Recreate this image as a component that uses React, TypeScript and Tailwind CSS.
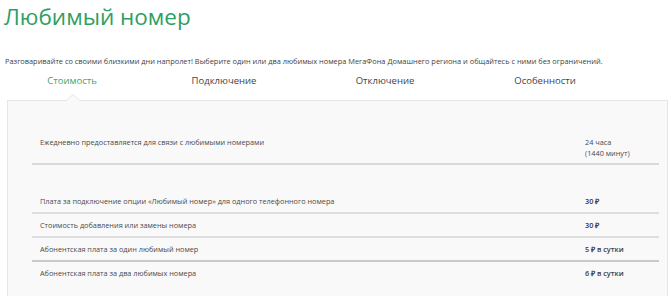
import React from 'react';

const tabs = [
  { label: 'Стоимость', w: 'w-[144px]', active: true },
  { label: 'Подключение', w: 'w-[160px]', active: false },
  { label: 'Отключение', w: 'w-[162px]', active: false },
  { label: 'Особенности', w: 'w-[158px]', active: false },
];

const prices = [
  { label: 'Плата за подключение опции «Любимый номер» для одного телефонного номера', value: '30 ₽', border: 'border-[#dedede]' },
  { label: 'Стоимость добавления или замены номера', value: '30 ₽', border: 'border-[#dedede]' },
  { label: 'Абонентская плата за один любимый номер', value: '5 ₽ в сутки', border: 'border-[#c9c9c9]' },
  { label: 'Абонентская плата за два любимых номера', value: '6 ₽ в сутки', border: 'border-transparent' },
];

const App: React.FC = () => {
  return (
    <div className="w-[671px] h-[296px] overflow-hidden bg-white font-['Open_Sans',sans-serif] text-[#4a4a4a]">
      {/* Title */}
      <h1 className="pl-[4px] pt-[2px] text-[22.5px] leading-[30px] text-[#2f9e62]">Любимый номер</h1>

      {/* Description */}
      <p className="mt-[24px] pl-[5px] text-[7.4px] leading-[10px] text-[#3f3f3f]">
        Разговаривайте со своими близкими дни напролет! Выберите один или два любимых номера МегаФона Домашнего региона и общайтесь с ними без ограничений.
      </p>

      {/* Tabs */}
      <div className="mt-[9px] flex">
        {tabs.map(t => (
          <div
            key={t.label}
            className={`${t.w} text-center text-[9.5px] leading-[12px] ${t.active ? 'text-[#3aa672]' : 'text-[#444]'}`}
          >
            {t.label}
          </div>
        ))}
      </div>

      {/* Panel */}
      <div className="relative mt-[13px] ml-[7px] w-[661px] h-[240px] border border-[#e6e6e6] bg-[#f9f9f9] pt-[36px]">
        <svg className="absolute left-[57px] -top-[7px]" width="16" height="8" viewBox="0 0 16 8">
          <path d="M0 7.5 L8 0.5 L16 7.5" fill="#f9f9f9" stroke="#e6e6e6" strokeWidth="1" />
        </svg>

        <div className="ml-[24px] mr-[8px]">
          {/* Daily hours */}
          <div className="flex border-b-2 border-[#dadada] pb-[4px] text-[7.3px] leading-[11px]">
            <div className="w-[553px] pl-[8px]">Ежедневно предоставляется для связи с любимыми номерами</div>
            <div>
              24 часа
              <br />
              (1440 минут)
            </div>
          </div>

          <div className="h-[25px]" />

          {prices.map(p => (
            <div key={p.label} className={`flex h-[24px] items-center border-b-2 ${p.border} text-[7.3px]`}>
              <div className="w-[553px] pl-[8px]">{p.label}</div>
              <div className="font-semibold text-[#3a3a3a]">{p.value}</div>
            </div>
          ))}
        </div>
      </div>
    </div>
  );
};

export default App;
